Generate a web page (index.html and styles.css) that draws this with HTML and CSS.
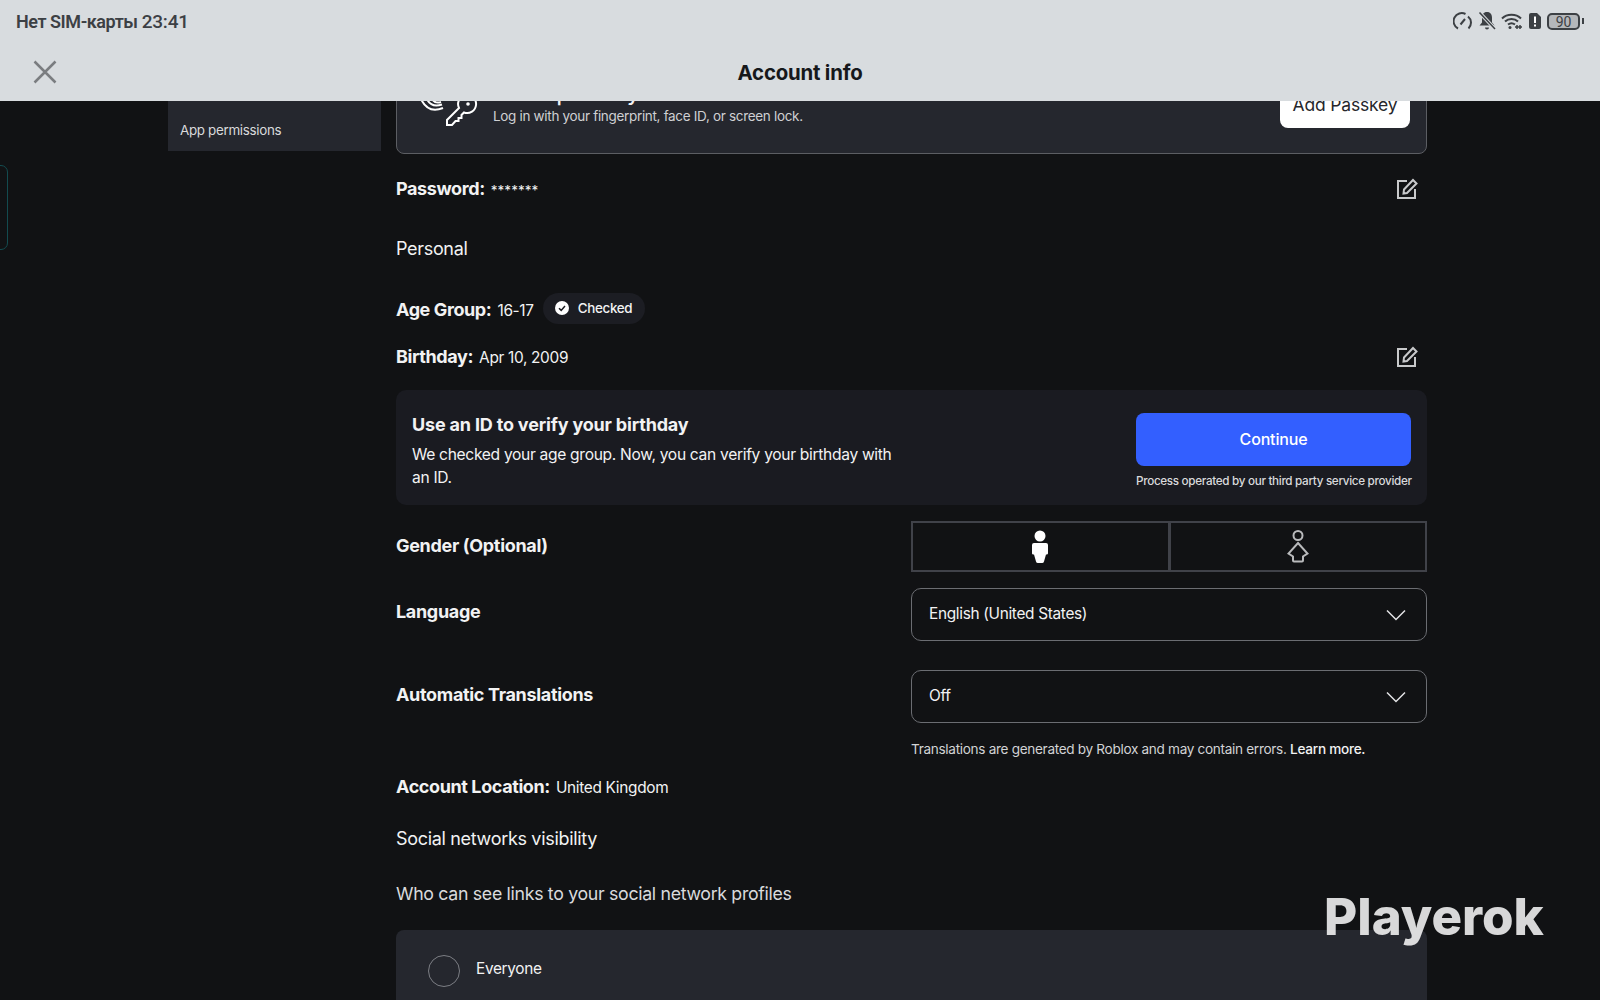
FILE: index.html
```html
<!DOCTYPE html>
<html lang="en">
<head>
    <meta charset="UTF-8">
    <meta name="viewport" content="width=device-width, initial-scale=1.0">
    <title>Account info</title>
    <link rel="stylesheet" href="styles.css">
</head>
<body>
    <header class="top-bar">
        <div class="status-bar">
            <span class="status-text">Нет SIM-карты <span class="status-time">23:41</span></span>
            <div class="status-icons">
                <svg width="20" height="18" viewBox="0 0 20 18" fill="none" stroke="#3c4044" stroke-width="2"><path d="M5 16.500A8 8 0 0 1 12.500 2M15 4.500A8 8 0 0 1 15.500 16.500M7.500 12.500L12 7"/></svg>
                <svg width="18" height="20" viewBox="0 0 18 20" fill="#3c4044"><path d="M9 1c3.500 0 5 2.500 5 5.500v5l2.500 3h-15l2.500-3v-5C4 3.500 5.500 1 9 1zM7 16.500h4a2 2 0 0 1-4 0z"/><path d="M1.500 1.500L17 18" stroke="#d8dcdf" stroke-width="3.500"/><path d="M1.500 1.500L17 18" stroke="#3c4044" stroke-width="1.500"/></svg>
                <svg width="22" height="18" viewBox="0 0 22 18" fill="none" stroke="#3c4044" stroke-width="2"><path d="M1 6.500C6 1.500 15 1.500 20 6.500M4 9.500C7.500 6 13.500 6 17 9.500M7 12.500c2-1.500 5-1.500 7 0"/><circle cx="9" cy="15.500" r="1.500" fill="#3c4044" stroke="none"/><path d="M14 15h7M16 13v4M19 13v4" stroke-width="1.500"/></svg>
                <svg width="14" height="18" viewBox="0 0 14 18"><path d="M3 1h6l4 4v10a2 2 0 0 1-2 2H3a2 2 0 0 1-2-2V3a2 2 0 0 1 2-2z" fill="#3c4044"/><path d="M7 4.500v6.500M7 12.500v2" stroke="#fff" stroke-width="2"/></svg>
                <div class="battery">
                    <span class="battery-body">90</span>
                    <span class="battery-tip"></span>
                </div>
            </div>
        </div>
        <div class="title-bar">
            <svg class="close-icon" width="24" height="24" viewBox="0 0 24 24" fill="none" stroke="#7a7d80" stroke-width="2.500"><path d="M1.500 1.500L22.500 22.500M22.500 1.500L1.500 22.500"/></svg>
            <h1>Account info</h1>
        </div>
    </header>

    <div class="edge-tab"></div>

    <div class="page">
        <aside class="sidebar">
            <a class="side-link">App permissions</a>
        </aside>

        <main class="content">
            <section class="passkey-card">
                <svg class="passkey-icon" width="60" height="60" viewBox="0 0 60 60" fill="none" stroke="#fff" stroke-width="2">
                    <path d="M1 27Q8 42 23 36M7 27Q11 36 22 32.500M12 27Q15 32 21 30"/>
                    <path d="M39 36A9 9 0 1 1 44 40.500L41.500 43V46H38.500V49H35.500L32 53H27V48Z"/>
                    <circle cx="48" cy="32" r="1.800" fill="#fff" stroke="none"/>
                </svg>
                <div class="passkey-text">
                    <p class="passkey-title">Add a passkey</p>
                    <p class="passkey-desc">Log in with your fingerprint, face ID, or screen lock.</p>
                </div>
                <button class="passkey-btn">Add Passkey</button>
            </section>

            <div class="info-row password-row">
                <p><b>Password:</b> <span class="stars">*******</span></p>
                <svg class="edit-icon" width="22" height="22" viewBox="0 0 22 22" fill="none" stroke="#c8c9cb" stroke-width="2"><path d="M11 3H2v17h17v-9"/><path d="M8 11.500L17 2l3.500 3.500-9.500 9.500-3.500.5z"/></svg>
            </div>

            <h2 class="section-title personal">Personal</h2>

            <div class="age-row">
                <p><b>Age Group:</b> 16-17</p>
                <span class="badge">
                    <svg width="14" height="14" viewBox="0 0 14 14"><circle cx="7" cy="7" r="7" fill="#fff"/><path d="M4 7.200l2.200 2.200L10 5" fill="none" stroke="#1a1b20" stroke-width="1.500"/></svg>
                    Checked
                </span>
            </div>

            <div class="info-row birthday-row">
                <p><b>Birthday:</b> Apr 10, 2009</p>
                <svg class="edit-icon" width="22" height="22" viewBox="0 0 22 22" fill="none" stroke="#c8c9cb" stroke-width="2"><path d="M11 3H2v17h17v-9"/><path d="M8 11.500L17 2l3.500 3.500-9.500 9.500-3.500.5z"/></svg>
            </div>

            <section class="verify-card">
                <div class="verify-text">
                    <h3>Use an ID to verify your birthday</h3>
                    <p>We checked your age group. Now, you can verify your birthday with an ID.</p>
                </div>
                <div class="verify-action">
                    <button class="continue-btn">Continue</button>
                    <small>Process operated by our third party service provider</small>
                </div>
            </section>

            <div class="form-row gender-row">
                <label>Gender (Optional)</label>
                <div class="gender-toggle">
                    <div class="gender-opt">
                        <svg width="18" height="34" viewBox="0 0 18 34" fill="#fff"><circle cx="9" cy="6" r="5.500"/><path d="M3 13h12a2 2 0 0 1 2 2v8c0 1-.5 1.500-2 1.500L13 31.500a2 2 0 0 1-2 1.500H7a2 2 0 0 1-2-1.500L3 24.500c-1.500 0-2-.5-2-1.500v-8a2 2 0 0 1 2-2z"/></svg>
                    </div>
                    <div class="gender-opt">
                        <svg width="22" height="34" viewBox="0 0 22 34" fill="none" stroke="#b9babc" stroke-width="2"><circle cx="11" cy="5.500" r="4.500"/><path d="M11 13L20.500 23.500 16 26.500V30.500q0 1-1 1H7q-1 0-1-1V26.500L1.500 23.500Z"/></svg>
                    </div>
                </div>
            </div>

            <div class="form-row lang-row">
                <label>Language</label>
                <div class="select">
                    <span>English (United States)</span>
                    <svg width="20" height="12" viewBox="0 0 20 12" fill="none" stroke="#e4e4e6" stroke-width="1.500"><path d="M1 1.500l9 9 9-9"/></svg>
                </div>
            </div>

            <div class="form-row trans-row">
                <label>Automatic Translations</label>
                <div class="select">
                    <span>Off</span>
                    <svg width="20" height="12" viewBox="0 0 20 12" fill="none" stroke="#e4e4e6" stroke-width="1.500"><path d="M1 1.500l9 9 9-9"/></svg>
                </div>
            </div>

            <p class="trans-note">Translations are generated by Roblox and may contain errors. <b>Learn more.</b></p>

            <p class="location"><b>Account Location:</b> United Kingdom</p>

            <h2 class="section-title social">Social networks visibility</h2>

            <p class="who">Who can see links to your social network profiles</p>

            <section class="radio-card">
                <span class="radio"></span>
                <span class="radio-label">Everyone</span>
            </section>
        </main>
    </div>

    <div class="watermark">Playerok</div>
</body>
</html>
```

FILE: styles.css
```css
* {
    box-sizing: border-box;
}
html, body {
    height: 100%;
}
body {
    margin: 0;
    height: 1000px;
    overflow: hidden;
    background-color: #111214;
    color: #f2f2f3;
    font-family: Inter, "Noto Sans", sans-serif;
    letter-spacing: -0.02em;
    position: relative;
}
p, h1, h2, h3 {
    margin: 0;
}
b {
    font-weight: 650;
    letter-spacing: -0.022em;
}

/* top bar */
.top-bar {
    height: 101px;
    background-color: #d8dcdf;
    position: relative;
    z-index: 2;
    letter-spacing: 0;
}
.status-bar {
    height: 42px;
    padding: 0 16px;
    display: flex;
    justify-content: space-between;
    align-items: center;
}
.status-text {
    font-family: Roboto, sans-serif;
    font-size: 18px;
    font-weight: 600;
    letter-spacing: -0.025em;
    color: #3c4044;
}
.status-time {
    font-size: 19px;
    font-weight: 500;
    letter-spacing: -0.01em;
}
.status-icons {
    display: flex;
    align-items: center;
    gap: 5px;
}
.battery {
    display: flex;
    align-items: center;
    gap: 2px;
}
.battery-body {
    width: 33px;
    height: 17px;
    border: 2px solid #3c4044;
    border-radius: 5px;
    background-color: #b4b7ba;
    color: #3c4044;
    font-family: Roboto, sans-serif;
    font-size: 14px;
    line-height: 14px;
    text-align: center;
}
.battery-tip {
    width: 2px;
    height: 6px;
    background-color: #3c4044;
}
.title-bar {
    height: 59px;
    position: relative;
    display: flex;
    align-items: center;
    justify-content: center;
}
.close-icon {
    position: absolute;
    left: 33px;
    top: 18px;
}
.title-bar h1 {
    font-size: 20.400px;
    font-weight: 700;
    letter-spacing: -0.01em;
    color: #16181b;
    margin-top: 2px;
}

.edge-tab {
    position: absolute;
    left: -10px;
    top: 165px;
    width: 18px;
    height: 85px;
    border: 1px solid #134b4f;
    border-radius: 7px;
}

/* page */
.page {
    display: flex;
    height: 899px;
    overflow: hidden;
    padding-left: 168px;
}
.sidebar {
    width: 213px;
    height: 50px;
    background-color: #25272e;
    padding: 19px 12px 0;
    font-size: 13.400px;
    line-height: 20px;
    color: #d9dadc;
}
.content {
    width: 1031px;
    margin-left: 15px;
    font-size: 15.400px;
}

.passkey-card {
    height: 120px;
    margin-top: -67px;
    padding: 0 16px 0 23px;
    background-color: #25272e;
    border: 1px solid #5c5e63;
    border-radius: 8px;
    display: flex;
    align-items: flex-end;
}
.passkey-icon {
    margin-bottom: 21px;
}
.passkey-text {
    flex: 1;
    margin-left: 13px;
    margin-bottom: 27px;
}
.passkey-title {
    font-size: 21.500px;
    font-weight: 500;
    line-height: 26px;
}
.passkey-desc {
    font-size: 13.500px;
    line-height: 20px;
    color: #cfd0d3;
}
.passkey-btn {
    width: 130px;
    height: 48px;
    margin-bottom: 25px;
    background-color: #fff;
    border: none;
    border-radius: 8px;
    color: #26272c;
    font-family: inherit;
    font-size: 17.500px;
    letter-spacing: -0.01em;
}

.info-row {
    display: flex;
    justify-content: space-between;
    align-items: center;
    padding-right: 9px;
}
.info-row p, .age-row p {
    margin-bottom: 2px;
}
.info-row b, .age-row b, .location b {
    font-size: 18px;
    margin-right: 2px;
}
.password-row {
    margin-top: 24px;
    height: 22px;
}
.stars {
    font-size: 13.500px;
    letter-spacing: 0;
}
.section-title {
    font-size: 18px;
    font-weight: 400;
    line-height: 24px;
}
.personal {
    margin-top: 37px;
}
.age-row {
    margin-top: 33px;
    display: flex;
    align-items: center;
    gap: 9px;
    height: 32px;
}
.badge {
    height: 31px;
    margin-bottom: 4px;
    padding: 0 13px 0 12px;
    border-radius: 16px;
    background-color: #1c1d23;
    font-size: 13.400px;
    font-weight: 500;
    display: flex;
    align-items: center;
    gap: 9px;
}
.birthday-row {
    margin-top: 19px;
    height: 24px;
}

.verify-card {
    margin-top: 21px;
    height: 115px;
    padding: 21px 16px 0;
    background-color: #1a1b21;
    border-radius: 10px;
    display: flex;
    justify-content: space-between;
    align-items: flex-start;
}
.verify-text {
    width: 480px;
    padding-top: 2px;
}
.verify-text h3 {
    font-size: 18px;
    font-weight: 650;
    letter-spacing: -0.01em;
    line-height: 24px;
    margin-bottom: 7px;
}
.verify-text p {
    font-size: 15.600px;
    line-height: 22.500px;
}
.verify-action {
    width: 275px;
    text-align: center;
    padding-top: 2px;
}
.continue-btn {
    width: 100%;
    height: 53px;
    margin-bottom: 4px;
    padding-bottom: 2px;
    border: none;
    border-radius: 8px;
    background-color: #335fff;
    color: #fff;
    font-family: inherit;
    font-size: 16px;
    font-weight: 500;
    letter-spacing: -0.01em;
}
.verify-action small {
    font-size: 11.700px;
    font-weight: 500;
    color: #d9dadc;
    white-space: nowrap;
}

.form-row {
    display: flex;
    justify-content: space-between;
}
.form-row label {
    font-size: 18px;
    font-weight: 650;
    letter-spacing: -0.018em;
    margin-top: 13px;
}
.gender-row {
    margin-top: 16px;
    align-items: center;
}
.gender-row label {
    margin-top: 0;
    margin-bottom: 2px;
}
.gender-toggle {
    width: 516px;
    height: 51px;
    display: flex;
}
.gender-opt {
    flex: 1;
    border: 2px solid #404249;
    display: flex;
    align-items: center;
    justify-content: center;
}
.gender-opt + .gender-opt {
    margin-left: -1px;
}
.select {
    width: 516px;
    height: 53px;
    padding: 0 20px 3px 17px;
    border: 1px solid #6b6d72;
    border-radius: 10px;
    display: flex;
    justify-content: space-between;
    align-items: center;
}
.select svg {
    margin-top: 3px;
}
.lang-row {
    margin-top: 16px;
}
.trans-row {
    margin-top: 29px;
}
.trans-row label {
    margin-top: 14px;
}
.trans-note {
    margin-top: 16px;
    margin-left: 515px;
    font-size: 13.600px;
    line-height: 20px;
    color: #d2d3d5;
    white-space: nowrap;
}
.trans-note b {
    color: #f2f2f3;
    font-weight: 500;
    letter-spacing: -0.02em;
}
.location {
    margin-top: 16px;
    line-height: 24px;
}
.social {
    margin-top: 27px;
}
.who {
    margin-top: 31px;
    font-size: 17.750px;
    line-height: 24px;
    color: #d9dadc;
}
.radio-card {
    margin-top: 24px;
    height: 120px;
    padding: 25px 32px;
    background-color: #25272e;
    border-radius: 8px;
    display: flex;
    align-items: flex-start;
    gap: 16px;
}
.radio {
    width: 32px;
    height: 32px;
    border: 1px solid #7c7e84;
    border-radius: 50%;
}
.radio-label {
    font-size: 15.400px;
    line-height: 26px;
    padding-top: 1px;
}

.watermark {
    position: absolute;
    left: 1324px;
    top: 885px;
    font-size: 51px;
    font-weight: 800;
    letter-spacing: 0;
    line-height: 64px;
    color: rgba(255, 255, 255, 0.84);
}
```
